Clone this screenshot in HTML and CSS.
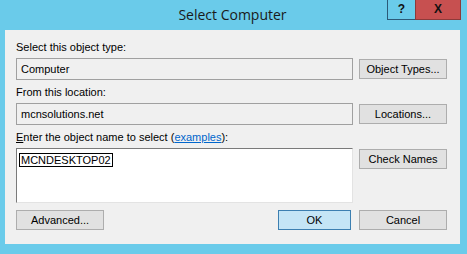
FILE: index.html
```html
<!DOCTYPE html>
<html lang="en">
<head>
    <meta charset="UTF-8">
    <title>Select Computer</title>
    <link rel="stylesheet" href="styles.css">
</head>
<body>
    <div class="window">
        <div class="titlebar">
            <div class="title">Select Computer</div>
            <div class="caption-buttons">
                <div class="cap-btn help">?</div>
                <div class="cap-btn close">X</div>
            </div>
        </div>
        <div class="client">
            <div class="label">Select this object type:</div>
            <div class="row">
                <div class="field readonly">Computer</div>
                <div class="btn">Object Types...</div>
            </div>
            <div class="label">From this location:</div>
            <div class="row">
                <div class="field readonly">mcnsolutions.net</div>
                <div class="btn">Locations...</div>
            </div>
            <div class="label"><u>E</u>nter the object name to select (<a class="link">examples</a>):</div>
            <div class="row">
                <div class="field names"><span class="sel">MCNDESKTOP02</span></div>
                <div class="btn">Check Names</div>
            </div>
            <div class="footer">
                <div class="btn">Advanced...</div>
                <div class="footer-right">
                    <div class="btn default">OK</div>
                    <div class="btn">Cancel</div>
                </div>
            </div>
            <div class="grip"></div>
        </div>
    </div>
</body>
</html>
```

FILE: styles.css
```css
body {
    margin: 0;
    background-color: #6acbea;
    font-family: 'Liberation Sans', Arial, sans-serif;
    font-size: 11px;
    color: #000;
}
.window {
    width: 467px;
    height: 254px;
    background-color: #6acbea;
}
.titlebar {
    position: relative;
    height: 30px;
}
.title {
    text-align: center;
    font-family: 'Open Sans', 'Noto Sans', sans-serif;
    font-size: 14px;
    line-height: 30px;
    color: #1a1a1a;
    padding-right: 2px;
}
.caption-buttons {
    position: absolute;
    top: 0;
    left: 387px;
    display: flex;
}
.cap-btn {
    height: 20px;
    line-height: 19px;
    text-align: center;
    font-weight: bold;
    font-size: 12px;
    box-sizing: border-box;
}
.help {
    width: 28px;
    border: 1px solid #2b5a78;
    border-top: none;
    border-right: none;
    color: #111;
}
.close {
    width: 46px;
    background-color: #c75050;
    border: 1px solid #8c3a3a;
    border-top: none;
    color: #111;
}
.client {
    position: relative;
    margin-left: 5px;
    width: 455px;
    height: 214px;
    background-color: #f0f0f0;
    padding: 11px 0 0 11px;
    box-sizing: border-box;
}
.label {
    height: 13px;
    line-height: 13px;
    margin-bottom: 4px;
}
.label u {
    text-decoration: underline;
}
.link {
    color: #0066cc;
    text-decoration: underline;
}
.row {
    display: flex;
    align-items: flex-start;
    gap: 6px;
    margin-bottom: 6px;
}
.field {
    width: 337px;
    height: 22px;
    box-sizing: border-box;
    padding: 3px 4px;
    line-height: 14px;
    border: 1px solid #a0a0a0;
}
.readonly {
    background-color: #f0f0f0;
}
.names {
    height: 55px;
    background-color: #fff;
    border-color: #7a7a7a #e3e3e3 #e3e3e3 #7a7a7a;
    padding: 4px 2px;
}
.sel {
    border: 1px solid #000;
    padding: 0 1px;
}
.btn {
    width: 88px;
    height: 20px;
    margin-top: 1px;
    box-sizing: border-box;
    border: 1px solid #adadad;
    background-color: #e1e1e1;
    text-align: center;
    line-height: 18px;
}
.default {
    width: 73px;
    background-color: #c4e5f6;
    border-color: #3c7fb1;
}
.footer {
    display: flex;
    justify-content: space-between;
    width: 431px;
    margin-top: 4px;
}
.footer-right {
    display: flex;
    gap: 8px;
}
.grip {
    position: absolute;
    right: 2px;
    bottom: 2px;
    width: 6px;
    height: 6px;
    background-image: radial-gradient(#b8b8b8 40%, transparent 45%);
    background-size: 2px 2px;
}
```
